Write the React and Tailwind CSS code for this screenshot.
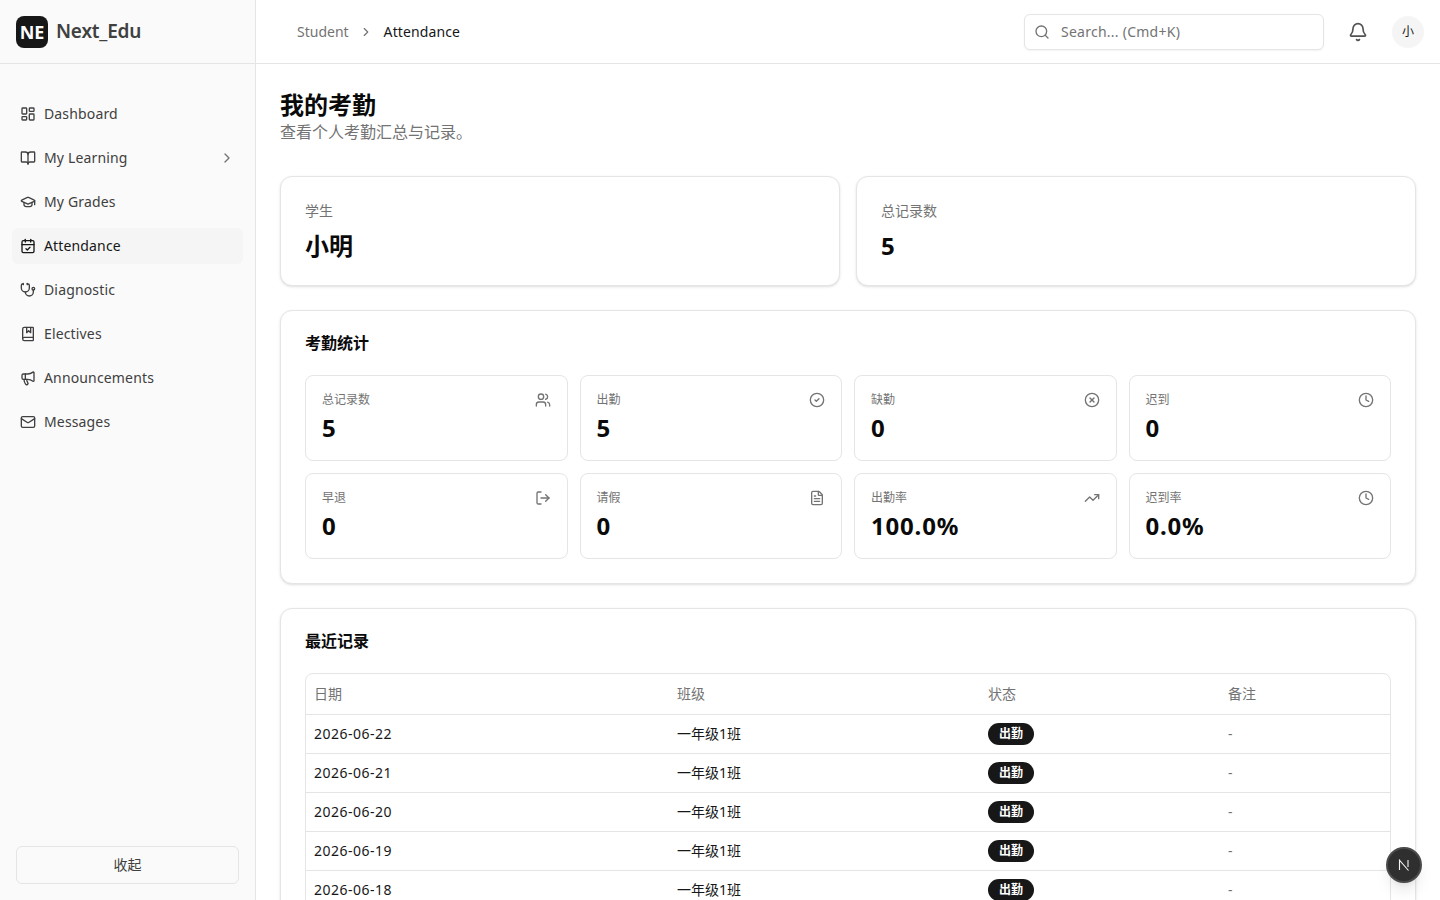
import React from 'react';
import {
  LayoutDashboard, BookOpen, GraduationCap, CalendarCheck, Stethoscope, BookMarked,
  Megaphone, Mail, ChevronRight, Search, Bell, Users, CircleCheck, CircleX, Clock,
  LogOut, FileText, TrendingUp,
} from 'lucide-react';

const navItems = [
  { label: 'Dashboard', icon: LayoutDashboard },
  { label: 'My Learning', icon: BookOpen, hasChildren: true },
  { label: 'My Grades', icon: GraduationCap },
  { label: 'Attendance', icon: CalendarCheck, active: true },
  { label: 'Diagnostic', icon: Stethoscope },
  { label: 'Electives', icon: BookMarked },
  { label: 'Announcements', icon: Megaphone },
  { label: 'Messages', icon: Mail },
];

const stats = [
  { label: '总记录数', value: '5', icon: Users },
  { label: '出勤', value: '5', icon: CircleCheck },
  { label: '缺勤', value: '0', icon: CircleX },
  { label: '迟到', value: '0', icon: Clock },
  { label: '早退', value: '0', icon: LogOut },
  { label: '请假', value: '0', icon: FileText },
  { label: '出勤率', value: '100.0%', icon: TrendingUp },
  { label: '迟到率', value: '0.0%', icon: Clock },
];

const records = ['2026-06-22', '2026-06-21', '2026-06-20', '2026-06-19', '2026-06-18'];

function Sidebar() {
  return (
    <aside className="flex h-full w-[256px] shrink-0 flex-col border-r border-[#e5e5e5] bg-[#fafafa]">
      <div className="flex h-16 shrink-0 items-center gap-2 border-b border-[#e5e5e5] px-4">
        <div className="flex h-8 w-8 items-center justify-center rounded-lg bg-[#171717] text-lg font-bold text-white">
          NE
        </div>
        <span className="text-[19px] font-semibold tracking-[-0.2px] text-[#404040]">Next_Edu</span>
      </div>
      <nav className="flex flex-1 flex-col gap-2 px-3 pt-8">
        {navItems.map((item) => (
          <div
            key={item.label}
            className={`flex h-9 items-center gap-2 rounded-md px-2 text-sm tracking-[0.15px] ${
              item.active ? 'bg-[#f5f5f5] text-[#171717]' : 'text-[#404040]'
            }`}
          >
            <item.icon className="h-4 w-4 shrink-0" />
            <span className="flex-1">{item.label}</span>
            {item.hasChildren && <ChevronRight className="h-4 w-4 text-[#737373]" />}
          </div>
        ))}
      </nav>
      <div className="p-4">
        <button className="h-[38px] w-full rounded-md border border-[#e5e5e5] text-sm text-[#404040]">收起</button>
      </div>
    </aside>
  );
}

function Header() {
  return (
    <header className="flex h-16 shrink-0 items-center justify-between border-b border-[#e5e5e5] bg-white pr-4 pl-[41px]">
      <div className="flex items-center gap-2.5 text-sm">
        <span className="text-[#737373]">Student</span>
        <ChevronRight className="h-3.5 w-3.5 text-[#737373]" />
        <span className="ml-px tracking-[0.1px] text-[#171717]">Attendance</span>
      </div>
      <div className="flex items-center">
        <div className="flex h-9 w-[300px] items-center gap-[11px] rounded-md border border-[#e5e5e5] bg-white px-[9px] shadow-xs">
          <Search className="h-4 w-4 text-[#737373]" />
          <span className="text-sm tracking-[0.25px] text-[#737373]">Search... (Cmd+K)</span>
        </div>
        <Bell className="ml-6 h-5 w-5 text-[#525252]" />
        <div className="ml-6 flex h-8 w-8 items-center justify-center rounded-full bg-[#f5f5f5] text-xs text-[#171717]">
          小
        </div>
      </div>
    </header>
  );
}

function InfoCard({ label, value }) {
  return (
    <div className="flex-1 rounded-xl border border-[#e5e5e5] bg-white p-6 shadow-sm">
      <div className="text-sm leading-5 text-[#737373]">{label}</div>
      <div className="mt-2.5 text-2xl leading-[30px] font-bold text-[#0a0a0a]">{value}</div>
    </div>
  );
}

function StatCard({ label, value, icon: Icon }) {
  return (
    <div className="rounded-lg border border-[#e5e5e5] bg-white p-4">
      <div className="flex h-4 items-center justify-between">
        <span className="text-xs text-[#737373]">{label}</span>
        <Icon className="h-4 w-4 text-[#737373]" />
      </div>
      <div className="mt-1 text-2xl leading-8 font-bold tracking-[0.8px] text-[#0a0a0a]">{value}</div>
    </div>
  );
}

export default function App() {
  return (
    <div className="flex h-screen overflow-hidden bg-white font-['Noto_Sans','Noto_Sans_CJK_SC',sans-serif]">
      <Sidebar />
      <div className="flex min-w-0 flex-1 flex-col">
        <Header />
        <main className="flex-1 overflow-hidden p-6">
          <h1 className="pt-0.5 text-2xl leading-[30px] font-bold text-[#0a0a0a]">我的考勤</h1>
          <p className="text-base leading-6 text-[#737373]">查看个人考勤汇总与记录。</p>

          <div className="mt-8 flex gap-4">
            <InfoCard label="学生" value="小明" />
            <InfoCard label="总记录数" value="5" />
          </div>

          <section className="mt-6 rounded-xl border border-[#e5e5e5] bg-white p-6 shadow-sm">
            <h2 className="mb-6 text-base leading-4 font-bold text-[#0a0a0a]">考勤统计</h2>
            <div className="grid grid-cols-4 gap-3">
              {stats.map((s) => (
                <StatCard key={s.label} {...s} />
              ))}
            </div>
          </section>

          <section className="mt-6 rounded-xl border border-[#e5e5e5] bg-white p-6 shadow-sm">
            <h2 className="mb-6 text-base leading-4 font-bold text-[#0a0a0a]">最近记录</h2>
            <div className="overflow-hidden rounded-lg border border-[#e5e5e5]">
              <table className="w-full table-fixed border-collapse text-sm">
                <colgroup>
                  <col className="w-[363px]" />
                  <col className="w-[311px]" />
                  <col className="w-[240px]" />
                  <col />
                </colgroup>
                <thead>
                  <tr className="h-10 border-b border-[#e5e5e5] text-left text-[#737373]">
                    <th className="px-2 font-normal">日期</th>
                    <th className="px-2 font-normal">班级</th>
                    <th className="px-2 font-normal">状态</th>
                    <th className="px-2 font-normal">备注</th>
                  </tr>
                </thead>
                <tbody>
                  {records.map((date) => (
                    <tr key={date} className="h-[39px] border-b border-[#e5e5e5] text-[#171717]">
                      <td className="px-2 tracking-[0.5px]">{date}</td>
                      <td className="px-2">一年级1班</td>
                      <td className="px-2">
                        <span className="inline-flex h-[22px] w-[46px] items-center justify-center rounded-full bg-[#171717] text-xs font-semibold text-white">
                          出勤
                        </span>
                      </td>
                      <td className="px-2 text-[#737373]">-</td>
                    </tr>
                  ))}
                </tbody>
              </table>
            </div>
          </section>
        </main>
      </div>
      <div className="fixed right-[18px] bottom-[17px] flex h-9 w-9 items-center justify-center rounded-full border-2 border-[#4a4a4a] bg-[#2f2f2f] shadow-lg">
        <svg width="14" height="14" viewBox="0 0 14 14" fill="none" stroke="#f5f5f5" strokeWidth="1.1">
          <path d="M2.5 12V2.2L11.5 12.5M11 2v7" />
        </svg>
      </div>
    </div>
  );
}
